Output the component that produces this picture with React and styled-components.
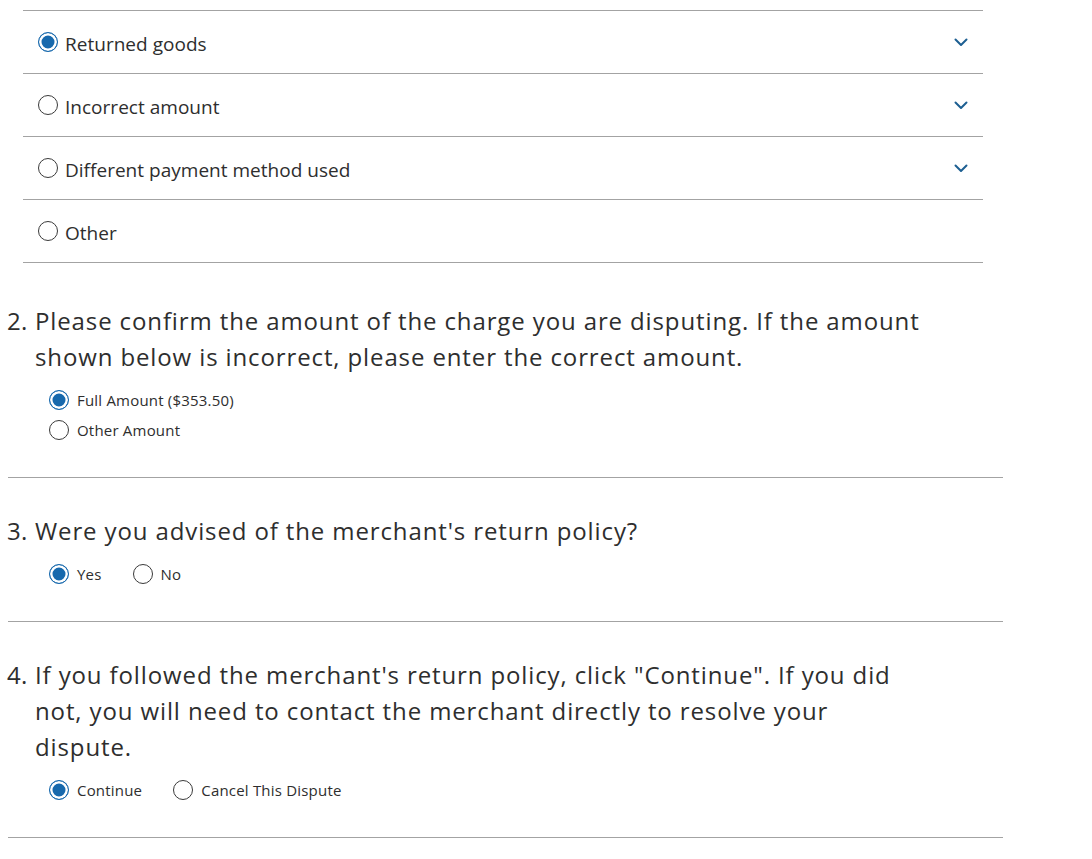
import React from 'react';
import styled, { createGlobalStyle } from 'styled-components';

const BLUE = '#1769ad';
const TEXT = '#2e2e2e';
const RULE = '#a3a3a3';

const GlobalStyle = createGlobalStyle`
  body {
    margin: 0;
    background: #ffffff;
    font-family: "Open Sans", "Noto Sans", sans-serif;
    color: ${TEXT};
  }
`;

const Page = styled.div`
  width: 1092px;
  padding-top: 10px;
`;

const Accordion = styled.div`
  margin-left: 23px;
  width: 960px;
  border-top: 1px solid ${RULE};
`;

const AccordionRow = styled.div`
  height: 62px;
  display: flex;
  align-items: center;
  padding-left: 15px;
  padding-right: 15px;
  border-bottom: 1px solid ${RULE};
`;

const RowLabel = styled.span`
  flex: 1;
  font-size: 19px;
  letter-spacing: 0.02px;
  margin-left: 7px;
  padding-top: 3px;
`;

const Ring = styled.span`
  box-sizing: border-box;
  width: 20px;
  height: 20px;
  border-radius: 50%;
  flex-shrink: 0;
  border: ${(p) => (p.$on ? `1.5px solid ${BLUE}` : '1px solid #3a3a3a')};
  background: ${(p) => (p.$on ? BLUE : '#fff')};
  box-shadow: ${(p) => (p.$on ? 'inset 0 0 0 2.5px #fff' : 'none')};
`;

const Chevron = () => (
  <svg width="14" height="9" viewBox="0 0 14 9" fill="none">
    <path d="M1.5 1.5 L7 7 L12.5 1.5" stroke="#1d5f92" strokeWidth="2" strokeLinecap="round" strokeLinejoin="round" />
  </svg>
);

const Question = styled.section`
  margin-left: 8px;
  width: 995px;
  padding-top: ${(p) => p.$top}px;
  padding-bottom: 32px;
  border-bottom: 1px solid ${RULE};
`;

const Heading = styled.h2`
  margin: 0 0 10px -1px;
  display: flex;
  font-weight: 400;
  font-size: 24px;
  line-height: 36px;
  letter-spacing: 0.88px;
  white-space: nowrap;
  color: ${TEXT};
`;

const Num = styled.span`
  width: 28px;
  flex-shrink: 0;
  letter-spacing: 0.3px;
`;

const Options = styled.div`
  display: flex;
  flex-direction: ${(p) => (p.$stack ? 'column' : 'row')};
  gap: ${(p) => (p.$stack ? '0' : '31px')};
  padding-left: 41px;
`;

const Option = styled.label`
  height: 30px;
  display: flex;
  align-items: center;
  gap: 8px;
  font-size: 15px;
  letter-spacing: 0.2px;
`;

const Radio = ({ on, children }) => (
  <Option>
    <Ring $on={on} />
    <span>{children}</span>
  </Option>
);

const reasons = [
  { label: 'Returned goods', on: true, more: true },
  { label: 'Incorrect amount', more: true },
  { label: 'Different payment method used', more: true },
  { label: 'Other' },
];

export default function App() {
  return (
    <Page>
      <GlobalStyle />
      <Accordion>
        {reasons.map((r) => (
          <AccordionRow key={r.label}>
            <Ring $on={r.on} />
            <RowLabel>{r.label}</RowLabel>
            {r.more && <Chevron />}
          </AccordionRow>
        ))}
      </Accordion>

      <Question $top={40}>
        <Heading>
          <Num>2.</Num>
          <span>
            Please confirm the amount of the charge you are disputing. If the amount
            <br />
            shown below is incorrect, please enter the correct amount.
          </span>
        </Heading>
        <Options $stack>
          <Radio on>Full Amount ($353.50)</Radio>
          <Radio>Other Amount</Radio>
        </Options>
      </Question>

      <Question $top={35}>
        <Heading>
          <Num>3.</Num>
          <span>Were you advised of the merchant's return policy?</span>
        </Heading>
        <Options>
          <Radio on>Yes</Radio>
          <Radio>No</Radio>
        </Options>
      </Question>

      <Question $top={35}>
        <Heading>
          <Num>4.</Num>
          <span>
            If you followed the merchant's return policy, click "Continue". If you did
            <br />
            not, you will need to contact the merchant directly to resolve your
            <br />
            dispute.
          </span>
        </Heading>
        <Options>
          <Radio on>Continue</Radio>
          <Radio>Cancel This Dispute</Radio>
        </Options>
      </Question>
    </Page>
  );
}
